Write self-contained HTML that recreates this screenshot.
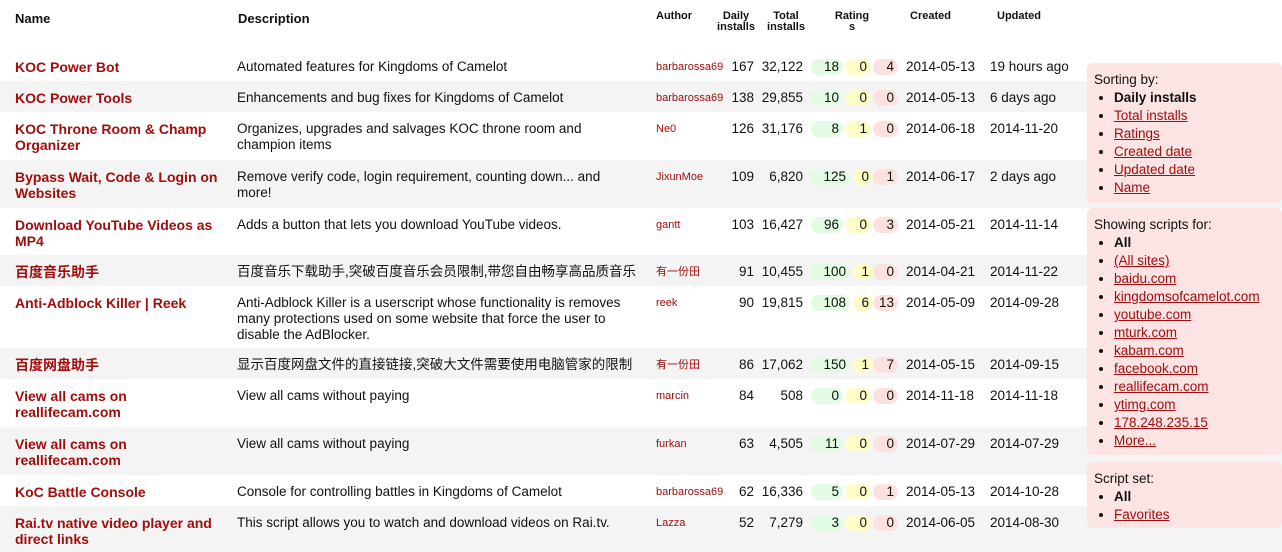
<!DOCTYPE html>
<html><head><meta charset="utf-8"><style>
body{margin:0;width:1282px;height:552px;overflow:hidden;background:#fff;font-family:"Liberation Sans","Noto Sans CJK SC",sans-serif;font-size:13.5px;color:#111;position:relative}
.h{position:absolute;font-weight:bold;font-size:13px}
.hs{font-size:11px;line-height:11px;text-align:center}
.r{position:absolute;left:0;width:1282px}
.g{background:#f4f4f4}
.r div{position:absolute;top:9px;line-height:16px}
.n{left:15px;width:215px;font-weight:bold;color:#a20d0d;font-size:14px}
.d{left:237px;width:400px}
.a{left:656px;font-size:11px;color:#a20d0d}
.di{left:700px;width:54px;text-align:right}
.t{left:754px;width:49px;text-align:right}
.c{left:906px}
.u{left:990px}
.p{height:16px;border-radius:8px;text-align:right;box-sizing:border-box;padding-right:4px}
.pg{left:811px;min-width:32px;background:#e2fbe2}
.py{left:845px;width:26px;background:#fdfdc8}
.pr{left:873px;width:25px;background:#fde0e0}
.s{position:absolute;left:1087px;width:195px;background:#fde4e4;border-radius:5px;font-size:13.5px;line-height:18px;box-sizing:border-box;padding:8px 0 0 7px}
.s ul{margin:0;padding:0 0 0 20px}
.s a{color:#a20d0d;text-decoration:underline}
.s b{font-weight:bold}
</style></head><body>
<div class="h" style="left:15px;top:11px">Name</div>
<div class="h" style="left:238px;top:11px">Description</div>
<div class="h hs" style="left:656px;top:11px">Author</div>
<div class="h hs" style="left:714px;top:11px;width:44px">Daily<br>installs</div>
<div class="h hs" style="left:764px;top:11px;width:44px">Total<br>installs</div>
<div class="h hs" style="left:830px;top:11px;width:44px">Rating<br>s</div>
<div class="h hs" style="left:910px;top:11px">Created</div>
<div class="h hs" style="left:997px;top:11px">Updated</div>

<div class="r" style="top:50px;height:31px"><div class="n">KOC Power Bot</div><div class="d">Automated features for Kingdoms of Camelot</div><div class="a">barbarossa69</div><div class="di">167</div><div class="t">32,122</div><div class="p pg">18</div><div class="p py">0</div><div class="p pr">4</div><div class="c">2014-05-13</div><div class="u">19 hours ago</div></div>
<div class="r g" style="top:81px;height:31px"><div class="n">KOC Power Tools</div><div class="d">Enhancements and bug fixes for Kingdoms of Camelot</div><div class="a">barbarossa69</div><div class="di">138</div><div class="t">29,855</div><div class="p pg">10</div><div class="p py">0</div><div class="p pr">0</div><div class="c">2014-05-13</div><div class="u">6 days ago</div></div>
<div class="r" style="top:112px;height:48px"><div class="n">KOC Throne Room &amp; Champ Organizer</div><div class="d">Organizes, upgrades and salvages KOC throne room and champion items</div><div class="a">Ne0</div><div class="di">126</div><div class="t">31,176</div><div class="p pg">8</div><div class="p py">1</div><div class="p pr">0</div><div class="c">2014-06-18</div><div class="u">2014-11-20</div></div>
<div class="r g" style="top:160px;height:48px"><div class="n">Bypass Wait, Code &amp; Login on Websites</div><div class="d">Remove verify code, login requirement, counting down... and more!</div><div class="a">JixunMoe</div><div class="di">109</div><div class="t">6,820</div><div class="p pg" style="min-width:39px">125</div><div class="p py" style="left:853px;width:20px">0</div><div class="p pr">1</div><div class="c">2014-06-17</div><div class="u">2 days ago</div></div>
<div class="r" style="top:208px;height:47px"><div class="n">Download YouTube Videos as MP4</div><div class="d">Adds a button that lets you download YouTube videos.</div><div class="a">gantt</div><div class="di">103</div><div class="t">16,427</div><div class="p pg">96</div><div class="p py">0</div><div class="p pr">3</div><div class="c">2014-05-21</div><div class="u">2014-11-14</div></div>
<div class="r g" style="top:255px;height:31px"><div class="n">百度音乐助手</div><div class="d">百度音乐下载助手,突破百度音乐会员限制,带您自由畅享高品质音乐</div><div class="a">有一份田</div><div class="di">91</div><div class="t">10,455</div><div class="p pg" style="min-width:39px">100</div><div class="p py" style="left:853px;width:20px">1</div><div class="p pr">0</div><div class="c">2014-04-21</div><div class="u">2014-11-22</div></div>
<div class="r" style="top:286px;height:62px"><div class="n">Anti-Adblock Killer | Reek</div><div class="d">Anti-Adblock Killer is a userscript whose functionality is removes many protections used on some website that force the user to disable the AdBlocker.</div><div class="a">reek</div><div class="di">90</div><div class="t">19,815</div><div class="p pg" style="min-width:39px">108</div><div class="p py" style="left:853px;width:20px">6</div><div class="p pr">13</div><div class="c">2014-05-09</div><div class="u">2014-09-28</div></div>
<div class="r g" style="top:348px;height:31px"><div class="n">百度网盘助手</div><div class="d">显示百度网盘文件的直接链接,突破大文件需要使用电脑管家的限制</div><div class="a">有一份田</div><div class="di">86</div><div class="t">17,062</div><div class="p pg" style="min-width:39px">150</div><div class="p py" style="left:853px;width:20px">1</div><div class="p pr">7</div><div class="c">2014-05-15</div><div class="u">2014-09-15</div></div>
<div class="r" style="top:379px;height:48px"><div class="n">View all cams on reallifecam.com</div><div class="d">View all cams without paying</div><div class="a">marcin</div><div class="di">84</div><div class="t">508</div><div class="p pg">0</div><div class="p py">0</div><div class="p pr">0</div><div class="c">2014-11-18</div><div class="u">2014-11-18</div></div>
<div class="r g" style="top:427px;height:48px"><div class="n">View all cams on reallifecam.com</div><div class="d">View all cams without paying</div><div class="a">furkan</div><div class="di">63</div><div class="t">4,505</div><div class="p pg">11</div><div class="p py">0</div><div class="p pr">0</div><div class="c">2014-07-29</div><div class="u">2014-07-29</div></div>
<div class="r" style="top:475px;height:31px"><div class="n">KoC Battle Console</div><div class="d">Console for controlling battles in Kingdoms of Camelot</div><div class="a">barbarossa69</div><div class="di">62</div><div class="t">16,336</div><div class="p pg">5</div><div class="p py">0</div><div class="p pr">1</div><div class="c">2014-05-13</div><div class="u">2014-10-28</div></div>
<div class="r g" style="top:506px;height:46px"><div class="n">Rai.tv native video player and direct links</div><div class="d">This script allows you to watch and download videos on Rai.tv.</div><div class="a">Lazza</div><div class="di">52</div><div class="t">7,279</div><div class="p pg">3</div><div class="p py">0</div><div class="p pr">0</div><div class="c">2014-06-05</div><div class="u">2014-08-30</div></div>

<div class="s" style="top:63px;height:140px">Sorting by:<ul><li><b>Daily installs</b></li><li><a>Total installs</a></li><li><a>Ratings</a></li><li><a>Created date</a></li><li><a>Updated date</a></li><li><a>Name</a></li></ul></div>
<div class="s" style="top:208px;height:247px">Showing scripts for:<ul><li><b>All</b></li><li><a>(All sites)</a></li><li><a>baidu.com</a></li><li><a>kingdomsofcamelot.com</a></li><li><a>youtube.com</a></li><li><a>mturk.com</a></li><li><a>kabam.com</a></li><li><a>facebook.com</a></li><li><a>reallifecam.com</a></li><li><a>ytimg.com</a></li><li><a>178.248.235.15</a></li><li><a>More...</a></li></ul></div>
<div class="s" style="top:462px;height:66px">Script set:<ul><li><b>All</b></li><li><a>Favorites</a></li></ul></div>
</body></html>
